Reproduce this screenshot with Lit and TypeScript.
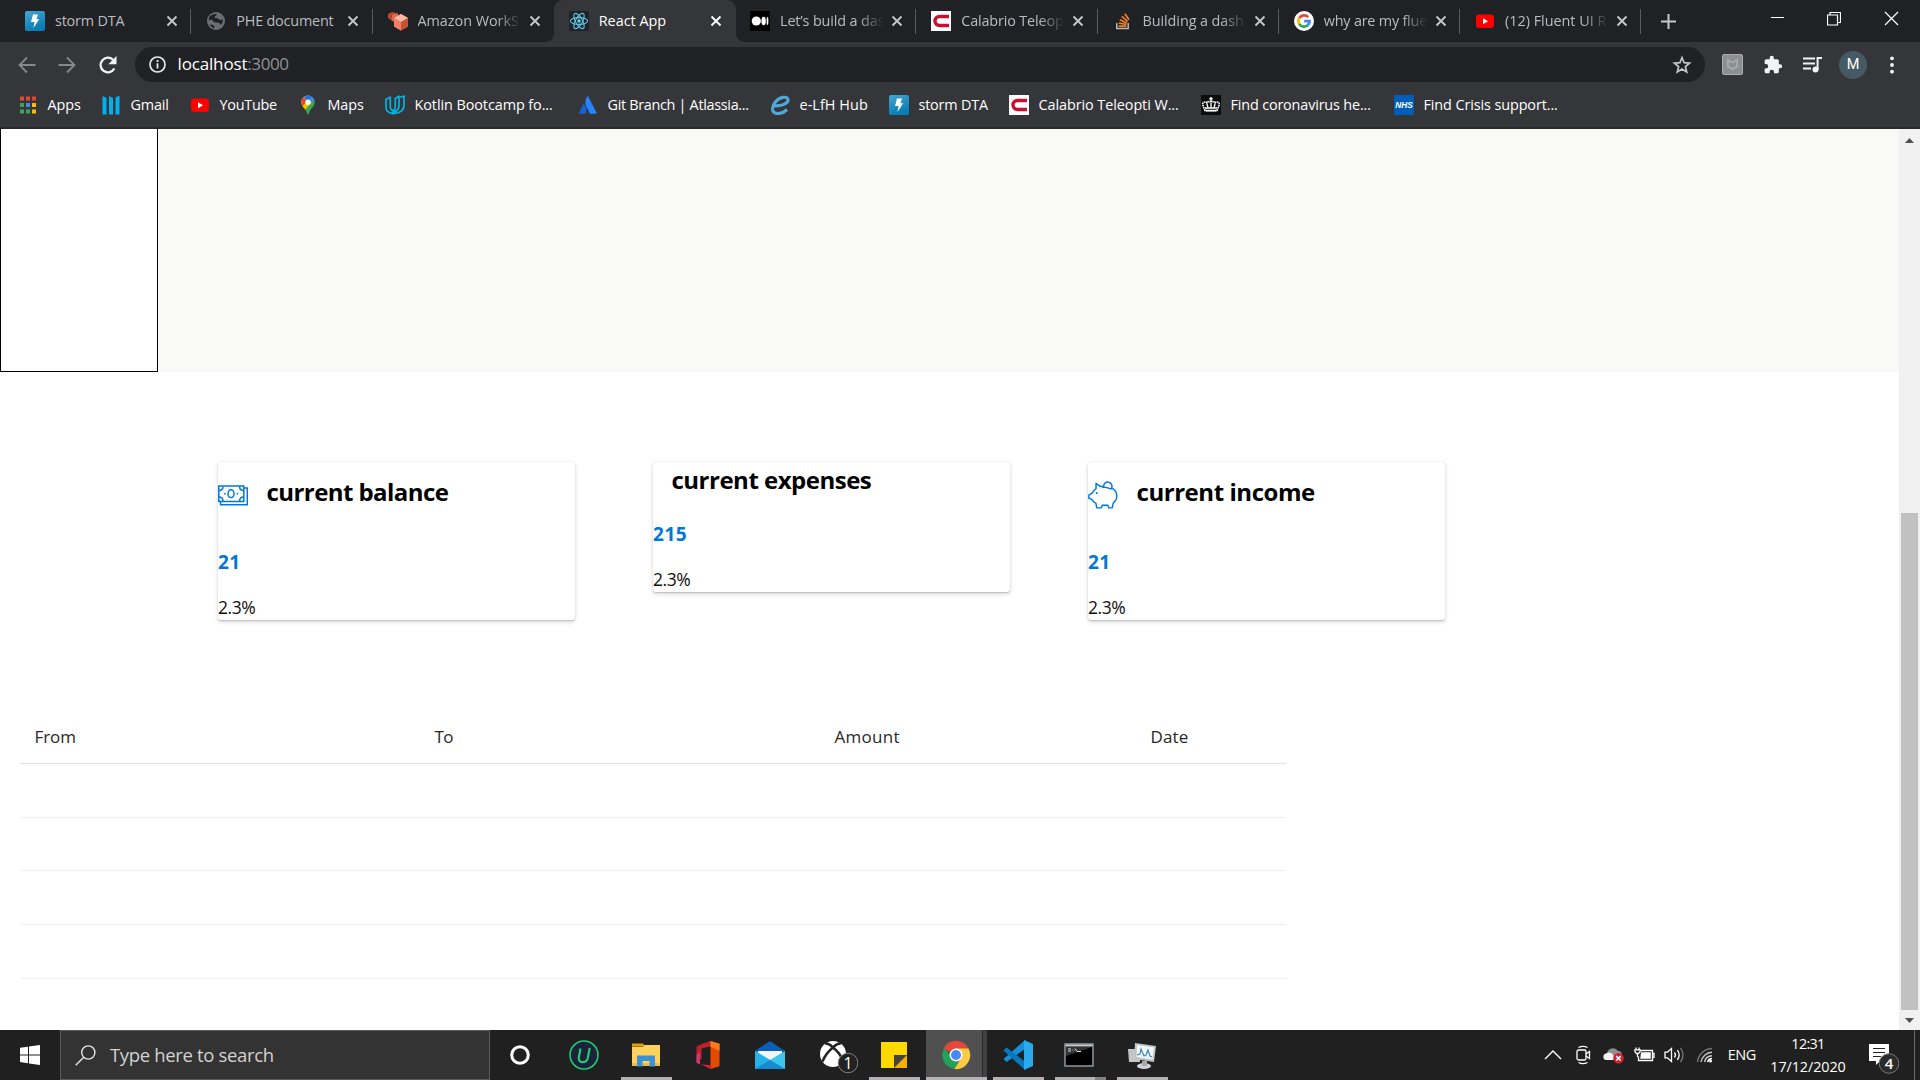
import { LitElement, html, css, TemplateResult } from "lit";
import { customElement, property } from "lit/decorators.js";
import { classMap } from "lit/directives/class-map.js";
import { styleMap } from "lit/directives/style-map.js";

/* A single line of text whose tracking is adjusted to fill a given width. */
@customElement("fit-text")
class FitText extends LitElement {
  @property() text = "";
  @property({ type: Number }) w = 0;
  static styles = css`
    :host { display: inline-block; white-space: pre; }
    .run { display: inline-block; font-variant-ligatures: none; }
  `;
  updated() {
    const run = this.renderRoot.querySelector(".run") as HTMLElement;
    run.style.letterSpacing = "0px";
    const natural = run.getBoundingClientRect().width;
    if (this.w > 0) run.style.letterSpacing = `${(this.w + 0.3 - natural) / this.text.length}px`;
  }
  render() {
    return html`<span class="run">${this.text}</span>`;
  }
}

const fit = (text: string, w: number) => html`<fit-text .text=${text} .w=${w}></fit-text>`;

const stormIcon = html`<svg width="20" height="20" viewBox="0 0 20 20"><defs><linearGradient id="a" x1="0" y1="0" x2=".4" y2="1"><stop offset="0" stop-color="#48a5cf"/><stop offset="1" stop-color="#067db5"/></linearGradient></defs><rect width="20" height="20" rx="2" fill="url(#a)"/><path d="M8 3.5h5l-1.6 4.8h2.8L8.4 17l1.2-6H6z" fill="#fff"/></svg>`;
const globeIcon = html`<svg width="20" height="20" viewBox="0 0 20 20"><circle cx="10" cy="10" r="9" fill="#6b6e72"/><path d="M3.200 6.200C5 3.500 8 2.600 11 3c-.3 1.700-2 1.800-2.600 3 .6 1.800 3.200.8 4.600 2.200 1 1.300 3 .6 4 .1 0 2.500-.9 4.300-2.200 5.700-.8-1.300-1.600-2.500-3.300-2.400-2.300.1-4.500-.5-5.200-2.600-1-.6-2.500 0-3.400.5-.1-1.300 0-2.200.3-3.300zM4 13.500c1.900 0 3.600.5 4.300 1.800.1.900.2 1.300.1 2C6.500 16.900 5 15.500 4 13.500z" fill="#202124"/></svg>`;
const amazonIcon = html`<svg width="20" height="20" viewBox="0 0 20 20"><path d="M0 3l4-2 3 .5v2L3.500 5 3 9 0 7z" fill="#c1442e"/><path d="M4 4l3-1.500 3-.2v3L6 7v4L3 9z" fill="#dd6b4d"/><path d="M13 3l7 4v8.500l-7 4-7-4V7z" fill="#e8765a"/><path d="M13 3l7 4-7 4-7-4z" fill="#f9b9a2"/><path d="M6 7l7 4v8.500l-7-4z" fill="#ef8063"/><path d="M13 11l7-4v8.500l-7 4z" fill="#c94f35"/></svg>`;
const reactIcon = html`<svg width="20" height="20" viewBox="0 0 20 20"><rect width="20" height="20" rx="1" fill="#20232a"/><g fill="none" stroke="#5cc5dd" stroke-width="1.100"><ellipse cx="10" cy="10" rx="8.600" ry="3.400"/><ellipse cx="10" cy="10" rx="8.600" ry="3.400" transform="rotate(60 10 10)"/><ellipse cx="10" cy="10" rx="8.600" ry="3.400" transform="rotate(120 10 10)"/></g><circle cx="10" cy="10" r="1.700" fill="#61dafb"/></svg>`;
const mediumIcon = html`<svg width="20" height="20" viewBox="0 0 20 20"><rect width="20" height="20" fill="#000"/><circle cx="6.300" cy="10" r="4.600" fill="#fff"/><ellipse cx="13.600" cy="10" rx="2.200" ry="4.300" fill="#fff"/><ellipse cx="17.500" cy="10" rx=".9" ry="3.900" fill="#fff"/></svg>`;
const calabrioIcon = html`<svg width="20" height="20" viewBox="0 0 20 20"><rect width="20" height="20" fill="#fff"/><path d="M18 5.500H8.500a4.500 4.500 0 0 0 0 9H18" fill="none" stroke="#c8102e" stroke-width="3.400"/></svg>`;
const stackIcon = html`<svg width="20" height="20" viewBox="0 0 20 20"><path d="M3.800 12v5.500h11.400V12" fill="none" stroke="#bcbbbb" stroke-width="1.500"/><g stroke="#f48024" stroke-width="1.700"><path d="M5.700 15.200h7.600M5.800 12l7.500 1.500M6.800 8.700l7 3.200M8.800 5.400l5.900 4.900M11.800 2.800l4.300 6"/></g></svg>`;
const googleIcon = html`<svg width="20" height="20" viewBox="0 0 20 20"><circle cx="10" cy="10" r="10" fill="#fff"/><g fill="none" stroke-width="2.700"><path d="M5.300 7.100A5.600 5.600 0 0 1 14.200 6.100" stroke="#ea4335"/><path d="M5.300 13A5.600 5.600 0 0 1 5.300 7" stroke="#fbbc05"/><path d="M14 14A5.600 5.600 0 0 1 5.200 12.900" stroke="#34a853"/><path d="M10.200 10.200h5.300c0 1.700-.5 3-1.700 4" stroke="#4285f4"/></g></svg>`;
const youtubeIcon = html`<svg width="20" height="20" viewBox="0 0 20 20"><rect x="1" y="3.500" width="18" height="13.500" rx="3.200" fill="#f00"/><path d="M8 7.300v6l5-3z" fill="#fff"/></svg>`;
const tabClose = html`<svg width="12" height="12" viewBox="0 0 12 12"><path d="M1.500 1.500l9 9M10.500 1.500l-9 9" stroke="currentColor" stroke-width="1.900"/></svg>`;

const appsIcon = html`<svg width="20" height="20" viewBox="0 0 20 20"><g><path fill="#ea4335" d="M2 1.500h4v4H2zM8 1.500h4v4H8zM14 1.500h4v4h-4z"/><path fill="#34a853" d="M2 8h4v4H2zM2 14.500h4v4H2zM8 14.500h4v4H8z"/><path fill="#4285f4" d="M8 8h4v4H8z"/><path fill="#fbbc05" d="M14 8h4v4h-4zM14 14.500h4v4h-4z"/></g></svg>`;
const gmailIcon = html`<svg width="20" height="20" viewBox="0 0 20 20"><path d="M1.500 1l4 2v16.500h-4zM8 1l4 2v16.500H8zM18.500.5v19h-4V2.500z" fill="#00b0f0"/></svg>`;
const mapsIcon = html`<svg width="20" height="20" viewBox="0 0 20 20"><defs><clipPath id="m"><path d="M10 .5a6.700 6.700 0 0 0-6.700 6.700C3.300 11.500 8 13.500 9.300 19c.2.800 1.200.8 1.400 0C12 13.500 16.700 11.500 16.700 7.200A6.700 6.700 0 0 0 10 .5z"/></clipPath></defs><g clip-path="url(#m)"><path fill="#34a853" d="M0 0h20v20H0z"/><path fill="#fbbc04" d="M0 15L13 1 5 0 0 5z M3 12l4 3 7-8-4-1z"/><path fill="#4285f4" d="M7 0h12v3.500L12.800 7 10 7z"/><path fill="#ea4335" d="M2 2l4 1 3 3-5 5-3-4z"/><path fill="#1a73e8" d="M5.500 1.500L9 6l6-5z"/></g><circle cx="10" cy="7.200" r="2.600" fill="#fff"/></svg>`;
const udacityIcon = html`<svg width="20" height="20" viewBox="0 0 20 20"><g fill="none" stroke="#02b3e4" stroke-width="1.700" stroke-linejoin="round" stroke-linecap="round"><path d="M5.300 2L1 4.500v7.700c0 3.200 2.200 5.300 5.700 6.300l4-2.200C7 16 5.300 14 5.300 11.500z"/><path d="M14 1.200l-3.700 2.300v8.500c0 1.800-.9 3.200-2.300 4M14 1.200v9.500c0 2.500-1.300 4.500-3.500 5.600"/><path d="M14 2.500L19 1v9.500c0 4.500-4 8.500-12.300 8"/></g></svg>`;
const atlassianIcon = html`<svg width="20" height="20" viewBox="0 0 20 20"><path d="M6 9.300c-.4-.5-.9-.4-1.100.1L1.100 17.800c-.2.500 0 .9.500.9h5.600c2-3.600 1.300-7.300-1.200-9.400z" fill="#1463d8"/><path d="M9.200 1.500c-2.500 4-2 7.500-.5 10.500l3 6.200c.1.300.4.500.7.500h5.600c.5 0 .8-.5.600-.9L10.200 1.500c-.2-.5-.7-.5-1 0z" fill="#2684ff"/></svg>`;
const elfhIcon = html`<svg width="20" height="20" viewBox="0 0 20 20"><path d="M4 10.800c7 .6 14.500-2.300 14-6.300-.7-4-9-2.500-13 3-4.500 6.500-2.500 11 3 11 3.500 0 6.500-1.500 9-4" fill="none" stroke="#4fa8d8" stroke-width="3.200"/></svg>`;
const crownIcon = html`<svg width="20" height="20" viewBox="0 0 20 20"><rect width="20" height="20" fill="#0b0c0c"/><path d="M10 2v4.500M8.300 3.800h3.400" stroke="#fff" stroke-width="1.500"/><path d="M4 15.500L2 10.500c-1.200-3 2-4.800 4-2.500 1-2 3-2 4-.5 1-1.500 3-1.500 4 .5 2-2.300 5.200-.5 4 2.500l-2 5z" fill="none" stroke="#fff" stroke-width="1.600" stroke-dasharray="1.600 .6"/><path d="M6 9l1 4M10 8v5M14 9l-1 4M4 13h12" stroke="#fff" stroke-width="1.300"/><path d="M4.500 15.700h11" stroke="#fff" stroke-width="1.600"/></svg>`;
const nhsIcon = html`<svg width="20" height="20" viewBox="0 0 20 20"><rect width="20" height="20" fill="#005eb8"/><text x="10" y="13.300" text-anchor="middle" textLength="17.500" lengthAdjust="spacingAndGlyphs" font-family="Liberation Sans, sans-serif" font-weight="700" font-style="italic" font-size="9.500" fill="#fff">NHS</text></svg>`;

interface Tab { icon: TemplateResult; text: string; w: number; active?: boolean; bar?: boolean }
const tabs: Tab[] = [
  { icon: stormIcon, text: "storm DTA", w: 69, bar: true },
  { icon: globeIcon, text: "PHE document", w: 97, bar: true },
  { icon: amazonIcon, text: "Amazon WorkS", w: 101 },
  { icon: reactIcon, text: "React App", w: 67, active: true },
  { icon: mediumIcon, text: "Let’s build a das", w: 104, bar: true },
  { icon: calabrioIcon, text: "Calabrio Teleop", w: 102, bar: true },
  { icon: stackIcon, text: "Building a dash", w: 101, bar: true },
  { icon: googleIcon, text: "why are my flue", w: 103, bar: true },
  { icon: youtubeIcon, text: "(12) Fluent UI R", w: 101, bar: true },
];

const bookmarks: { icon: TemplateResult; text: string; w: number }[] = [
  { icon: appsIcon, text: "Apps", w: 33 },
  { icon: gmailIcon, text: "Gmail", w: 38 },
  { icon: youtubeIcon, text: "YouTube", w: 57 },
  { icon: mapsIcon, text: "Maps", w: 36 },
  { icon: udacityIcon, text: "Kotlin Bootcamp fo...", w: 138 },
  { icon: atlassianIcon, text: "Git Branch | Atlassia...", w: 141 },
  { icon: elfhIcon, text: "e-LfH Hub", w: 68 },
  { icon: stormIcon, text: "storm DTA", w: 69 },
  { icon: calabrioIcon, text: "Calabrio Teleopti W...", w: 140 },
  { icon: crownIcon, text: "Find coronavirus he...", w: 140 },
  { icon: nhsIcon, text: "Find Crisis support...", w: 134 },
];

@customElement("browser-chrome")
class BrowserChrome extends LitElement {
  static styles = css`
    :host { display: block; height: 129px; background: #35363a; color: #fff; font: 14.4px/20px "Open Sans", sans-serif; }
    svg { display: block; flex: none; }
    .chrome { display: flex; flex-direction: column; height: 129px; box-sizing: border-box; border-bottom: 2px solid #28292c; }
    .strip { display: flex; height: 42px; background: #202124; padding-left: 11px; }
    .tab { display: flex; align-items: center; width: 181.25px; flex: none; box-sizing: border-box; padding-left: 14px; color: #b9bcc1; }
    .tab.bar { background: linear-gradient(#5a5c60, #5a5c60) right 1px top 9px / 1px 25px no-repeat; }
    .tab.active { position: relative; width: 182.25px; margin-left: -1px; padding-left: 15px; background: #35363a; color: #fff; border-radius: 9px 9px 0 0; }
    .active::before, .active::after { content: ""; position: absolute; bottom: 0; width: 8px; height: 8px; }
    .active::before { left: -8px; background: radial-gradient(circle at 0 0, transparent 7.5px, #35363a 8px); }
    .active::after { right: -8px; background: radial-gradient(circle at 100% 0, transparent 7.5px, #35363a 8px); }
    .label { width: 106px; margin-left: 10px; height: 20px; }
    .label.long { -webkit-mask-image: linear-gradient(90deg, #000 74%, transparent 98%); mask-image: linear-gradient(90deg, #000 74%, transparent 98%); }
    .x { margin-left: 5px; color: #c5c7ca; }
    .active .x { color: #fff; }
    .plus { margin: 13px 0 0 18px; }
    .win { display: flex; margin-left: auto; padding: 11px 21px 0 0; gap: 43px; }
    .min { margin-right: -1px; }
    .bar2 { display: flex; align-items: center; height: 45px; }
    .nav { display: flex; width: 135px; box-sizing: border-box; padding-left: 17px; gap: 20px; }
    .omni { display: flex; align-items: center; width: 1570px; height: 35px; border-radius: 18px; background: #202124; box-sizing: border-box; padding: 0 12px 0 13px; }
    .url { display: flex; margin-left: 10.5px; font-size: 17px; line-height: 24px; margin-top: -1px; }
    .port { color: #8f9296; }
    .star { margin-left: auto; }
    .tools { display: flex; align-items: center; padding-left: 17px; }
    .puzzle { margin-left: 20px; }
    .music { margin-left: 19px; }
    .me { width: 28px; height: 28px; border-radius: 50%; background: #455a64; text-align: center; line-height: 28px; font-size: 14.5px; font-family: Roboto, sans-serif; margin-left: 16px; }
    .dots { margin-left: 22px; }
    .marks { display: grid; grid-template-columns: 83px 89px 108px 87px 193px 192px 119px 120px 192px 193px 180px; padding: 8px 0 0 18px; }
    .mark { display: flex; align-items: center; gap: 9.5px; height: 20px; }
  `;
  render() {
    return html`
      <div class="chrome">
        <div class="strip">
          ${tabs.map((t) => html`
            <div class=${classMap({ tab: true, active: !!t.active, bar: !!t.bar })}>
              ${t.icon}
              <div class=${classMap({ label: true, long: t.w > 100 })}>${fit(t.text, t.w)}</div>
              <span class="x">${tabClose}</span>
            </div>`)}
          <svg class="plus" width="17" height="17" viewBox="0 0 17 17"><path d="M8.500 1v15M1 8.500h15" stroke="#c5c7ca" stroke-width="2"/></svg>
          <div class="win">
            <svg class="min" width="14" height="14" viewBox="0 0 14 14"><path d="M0 6.500h13" stroke="#fff"/></svg>
            <svg width="14" height="15" viewBox="0 0 14 15"><path d="M.5 4h10v10H.5zM3 4V1.500h10.500v10H11" fill="none" stroke="#fff" stroke-width="1.200"/></svg>
            <svg width="15" height="15" viewBox="0 0 15 15"><path d="M1 1l13 13M14 1L1 14" stroke="#fff" stroke-width="1.200"/></svg>
          </div>
        </div>
        <div class="bar2">
          <div class="nav">
            <svg width="20" height="20" viewBox="0 0 20 20"><path d="M18.500 10H3M10 2.500L2.500 10l7.500 7.500" fill="none" stroke="#87888b" stroke-width="1.800"/></svg>
            <svg width="20" height="20" viewBox="0 0 20 20"><path d="M1.500 10H17M10 2.500l7.500 7.500-7.500 7.500" fill="none" stroke="#87888b" stroke-width="1.800"/></svg>
            <svg width="22" height="20" viewBox="0 0 22 20"><path d="M17.300 13.500A7.300 7.300 0 1 1 16 4.800" fill="none" stroke="#f1f3f4" stroke-width="2.300"/><path d="M19.500 1v8.200h-8.200z" fill="#f1f3f4"/></svg>
          </div>
          <div class="omni">
            <svg width="19" height="19" viewBox="0 0 19 19"><circle cx="9.500" cy="9.500" r="7.500" fill="none" stroke="#e8eaed" stroke-width="1.700"/><path d="M9.500 8.300v5.200M9.500 5v2" stroke="#e8eaed" stroke-width="1.800"/></svg>
            <div class="url">${fit("localhost", 69.5)}<span class="port">${fit(":3000", 41)}</span></div>
            <svg class="star" width="22" height="22" viewBox="0 0 22 22"><path d="M11 3.500l2.100 5.200 5.500.4-4.200 3.500 1.300 5.400-4.700-3-4.700 3 1.300-5.400-4.200-3.500 5.500-.4z" fill="none" stroke="#c5c7ca" stroke-width="1.700"/></svg>
          </div>
          <div class="tools">
            <svg width="21" height="21" viewBox="0 0 21 21"><rect x=".5" y=".5" width="20" height="20" rx="1.500" fill="#8d9093" stroke="#a9acaf"/><path d="M6 6l4.500 2.500L15 6v6.800L10.500 15 6 12.800z" fill="none" stroke="#a9adb2" stroke-width="1.800"/></svg>
            <svg class="puzzle" width="20" height="20" viewBox="0 0 24 24"><path d="M20.500 11H19V7a2 2 0 0 0-2-2h-4V3.500a2.500 2.500 0 0 0-5 0V5H4a2 2 0 0 0-2 2v3.800h1.500a2.700 2.700 0 0 1 0 5.400H2V20c0 1.100.9 2 2 2h3.800v-1.500a2.700 2.700 0 0 1 5.400 0V22H17a2 2 0 0 0 2-2v-4h1.500a2.500 2.500 0 0 0 0-5z" fill="#f1f3f4"/></svg>
            <svg class="music" width="21" height="20" viewBox="0 0 21 20"><path d="M1 3.500h12M1 8.500h12M1 13.500h8" stroke="#f1f3f4" stroke-width="2"/><circle cx="13.500" cy="14.500" r="3" fill="#f1f3f4"/><path d="M15.600 15V3H20" fill="none" stroke="#f1f3f4" stroke-width="2"/></svg>
            <div class="me">M</div>
            <svg class="dots" width="6" height="20" viewBox="0 0 6 20"><g fill="#f1f3f4"><circle cx="3" cy="3.300" r="1.900"/><circle cx="3" cy="10" r="1.900"/><circle cx="3" cy="16.700" r="1.900"/></g></svg>
          </div>
        </div>
        <div class="marks">
          ${bookmarks.map((b) => html`<div class="mark">${b.icon}${fit(b.text, b.w)}</div>`)}
        </div>
      </div>`;
  }
}

const moneyIcon = html`<svg width="30" height="21" viewBox="0 0 30 21"><g fill="none" stroke="#0078d4" stroke-width="1.500"><path d="M.8 1h25v15.500H.8z"/><path d="M26 3h3.300v16.800H2.500V17"/><path d="M1 5.500c2.500 0 4-1.500 4-4M25.600 5.500c-2.500 0-4-1.500-4-4M1 12c2.500 0 4 1.500 4 4M25.600 12c-2.500 0-4 1.500-4 4"/><ellipse cx="13" cy="8.700" rx="3" ry="3.900"/></g><path d="M6 8h1.600v1.500H6zM18.600 8h1.600v1.500h-1.600z" fill="#0078d4"/></svg>`;
const pigIcon = html`<svg width="31" height="29" viewBox="0 0 31 29"><g fill="none" stroke="#0078d4" stroke-width="1.500" stroke-linejoin="round"><path d="M16 5.500L12.500 5 8.300 2v5.500C6.500 8.500 5.500 10 4.500 11.700L.9 14v3.300l3 1.200c1 1.700 2.500 3.200 4.300 4.200L9 27.300h4.700l1-2.800h5.800l1 2.800H25l1-5c2.500-2 3.800-4.700 3.800-7.500 0-3.500-2-6.300-5-8"/><path d="M14.500 5.800c3.500.1 6.500.7 9.800 2.200"/><path d="M16.300 6a4.300 4.300 0 1 1 7.500 1.700"/></g><circle cx="9" cy="12" r="1" fill="#0078d4"/></svg>`;

interface Card { icon?: TemplateResult; title: string; tw: number; value: string; vw: number }
const cards: Card[] = [
  { icon: moneyIcon, title: "current balance", tw: 181.5, value: "21", vw: 22 },
  { title: "current expenses", tw: 199.5, value: "215", vw: 34 },
  { icon: pigIcon, title: "current income", tw: 178, value: "21", vw: 22 },
];
const columns = [
  { name: "From", w: 41, span: 400 },
  { name: "To", w: 18, span: 400 },
  { name: "Amount", w: 65, span: 316 },
  { name: "Date", w: 37.5, span: 150 },
];

@customElement("dashboard-page")
class DashboardPage extends LitElement {
  static styles = css`
    :host { display: flex; height: 901px; background: #fff; font-family: "Open Sans", sans-serif; }
    .page { flex: 1; overflow: hidden; }
    .band { height: 243px; background: #f9f9f8; }
    .side { width: 158px; height: 243px; box-sizing: border-box; background: #fff; border: 1px solid #000; border-top: 0; }
    .cards { display: flex; align-items: flex-start; gap: 78px; padding: 90px 0 0 218px; height: 249px; box-sizing: border-box; }
    .card { width: 357px; height: 158px; border-radius: 3px; box-shadow: 0 2px 4.5px rgba(0,0,0,.16), 0 .4px 1.2px rgba(0,0,0,.14); background: #fff; }
    .card.plain { height: 130px; }
    .head { display: flex; height: 86px; box-sizing: border-box; padding-top: 15px; }
    .plain .head { height: 58px; padding-top: 3px; }
    .pic { width: 30px; height: 29px; margin-top: 3.5px; display: flex; align-items: center; }
    .title { font-size: 24px; font-weight: 700; line-height: 30px; color: #000; margin-left: 18.5px; }
    .value { font-size: 19px; font-weight: 700; line-height: 26px; color: #0078d4; height: 26px; margin-top: 1px; }
    .pct { font-size: 17.5px; font-weight: 400; line-height: 24px; color: #111; height: 24px; margin-top: 20px; }
    .table { width: 1266px; margin: 0 0 0 20px; padding-top: 88px; }
    .row { height: 54px; box-sizing: border-box; border-bottom: 1px solid #f0f0f0; }
    .row.h { display: flex; height: 55px; border-bottom-color: #e3e2e1; padding-top: 16px; }
    .row.alt { height: 53px; }
    .cell { padding-left: 14.5px; box-sizing: border-box; font-size: 17px; font-weight: 500; line-height: 24px; color: #292827; }
    .scroll { display: flex; flex-direction: column; align-items: center; width: 21px; background: #f1f1f1; }
    .scroll svg { display: block; }
    .track { flex: 1; padding-top: 363px; display: flex; }
    .thumb { width: 17px; background: #c1c1c1; }
  `;
  render() {
    return html`
      <div class="page">
        <div class="band"><div class="side"></div></div>
        <div class="cards">
          ${cards.map((c) => html`
            <div class=${classMap({ card: true, plain: !c.icon })}>
              <div class="head">
                ${c.icon ? html`<div class="pic">${c.icon}</div>` : ""}
                <div class="title">${fit(c.title, c.tw)}</div>
              </div>
              <div class="value">${fit(c.value, c.vw)}</div>
              <div class="pct">${fit("2.3%", 37)}</div>
            </div>`)}
        </div>
        <div class="table">
          <div class="row h">
            ${columns.map((c) => html`<div class="cell" style=${styleMap({ width: `${c.span}px` })}>${fit(c.name, c.w)}</div>`)}
          </div>
          <div class="row"></div><div class="row alt"></div><div class="row"></div><div class="row"></div>
        </div>
      </div>
      <div class="scroll">
        <svg width="21" height="21" viewBox="0 0 21 21"><path d="M6 14h9l-4.500-5z" fill="#505050"/></svg>
        <div class="track"><div class="thumb"></div></div>
        <svg width="21" height="20" viewBox="0 0 21 20"><path d="M6 8h9l-4.500 5z" fill="#505050"/></svg>
      </div>`;
  }
}

const taskIcons: { icon: TemplateResult; state?: string }[] = [
  { icon: html`<svg width="32" height="32" viewBox="0 0 32 32"><circle cx="16" cy="16" r="8.300" fill="none" stroke="#fff" stroke-width="3"/></svg>`, state: "cortana" },
  { icon: html`<svg width="32" height="32" viewBox="0 0 32 32"><circle cx="16" cy="16" r="14" fill="#1c2237" stroke="#1fc978" stroke-width="1.600"/><path d="M12.500 9.500l-1.700 9c-.7 6 7.700 6.300 9 .5l1.900-10" fill="none" stroke="#1fc978" stroke-width="2.200"/></svg>` },
  { icon: html`<svg width="32" height="32" viewBox="0 0 32 32"><path d="M2 4.500h11l2 2.500H2z" fill="#e2a200"/><path d="M2 7.500h11l2-1.500h15v21H2z" fill="#ffd25c"/><path d="M2 24h28v3H2z" fill="#e9bb4c"/><path d="M7 27.500v-11h18v11h-5.500V22h-7v5.500z" fill="#3a92d6"/></svg>`, state: "open" },
  { icon: html`<svg width="32" height="32" viewBox="0 0 32 32"><path d="M18 2L9 5.200 4.500 7.500V22l5-2V9.500L20 7z" fill="#b8232c"/><path d="M4.500 16v8l3.500 1.300V13z" fill="#c93a72"/><path d="M18.500 2l9 2.800v22.400l-9 2.800z" fill="#e64a00"/><path d="M18.500 2l9 2.800v7l-9-4z" fill="#ff7a1a"/><path d="M9 25.300l9.500 1v3.700z" fill="#e01b40"/></svg>` },
  { icon: html`<svg width="32" height="32" viewBox="0 0 32 32"><path d="M1 12L16 2l15 10v7H1z" fill="#0a5fb8"/><path d="M4 12h24v7L16 26 4 19z" fill="#f3f6f8"/><path d="M1 12l15 9L31 12v18H1z" fill="#3cc6ee"/><path d="M1 12l15 9-15 9z" fill="#25b2e8"/><path d="M16 21L31 30H1z" fill="#1d92d8"/><path d="M1 30l15-9 4 2.500L31 30z" fill="#188ad2"/></svg>` },
  { icon: html`<svg width="42" height="40" viewBox="0 0 42 40"><circle cx="17" cy="16" r="13" fill="#fff"/><path d="M6.500 23.500C9 17.500 13 12.500 17 9.500M27.500 23.500C25 17.500 21 12.500 17 9.500M9 5.500C12 5 14.500 6.500 17 9.500 19.500 6.500 22 5 25 5.500" fill="none" stroke="#222" stroke-width="2.500"/><circle cx="32" cy="25" r="9.800" fill="#222" stroke="#808080"/><text x="32" y="31" text-anchor="middle" font-family="Open Sans, sans-serif" font-size="16" fill="#fff">1</text></svg>`, state: "wide" },
  { icon: html`<svg width="32" height="32" viewBox="0 0 32 32"><path d="M3 3h26v26H3z" fill="#ffd800"/><path d="M16 17h13v12H16z" fill="#f5b000"/><path d="M16 16h13L16 29z" fill="#44423d"/></svg>`, state: "open" },
  { icon: html`<svg width="32" height="32" viewBox="0 0 32 32"><path d="M16 16L3.500 9.500A14 14 0 0 1 28.500 9.500z" fill="#e4483b"/><path d="M16 16h-6L4 9.200A14 14 0 0 0 14.500 30L20 20z" fill="#23a15b"/><path d="M16 9.500h12.500A14 14 0 0 1 14.500 30L21 19z" fill="#fbcb43"/><circle cx="16" cy="16" r="6.500" fill="#fff"/><circle cx="16" cy="16" r="5" fill="#4688f4"/></svg>`, state: "active" },
  { icon: html`<svg width="32" height="32" viewBox="0 0 32 32"><path d="M23 1L1.500 20 4.500 23 23 10z" fill="#168fda"/><path d="M1.500 11.500l3-3L23 22.500V31z" fill="#0877bd"/><path d="M22 1l9 4v22l-9 4z" fill="#2aa9ee"/></svg>`, state: "open" },
  { icon: html`<svg width="32" height="32" viewBox="0 0 32 32"><path d="M2 5h28v22H2z" fill="#000" stroke="#8d979f" stroke-width="1.500"/><path d="M2.500 5.500h27v2h-27z" fill="#c5ccd2"/><path d="M3 8h26L3 17z" fill="#333"/><path d="M5 10h3M5 12h3M10 10.500v1M12 9.500l2 3h4" stroke="#ddd" fill="none"/></svg>`, state: "open multi" },
  { icon: html`<svg width="32" height="32" viewBox="0 0 32 32"><path d="M2 10h12v13H3z" fill="#c4c6c7"/><ellipse cx="18" cy="27" rx="7" ry="3" fill="#d0d2d3"/><path d="M16 22h5v5h-5z" fill="#aaa"/><path d="M9 4l21 3-2 16-20-3z" fill="#bfc3c5"/><path d="M11 6l17 2.500-1.500 12L10.500 18z" fill="#f2f7fa"/><path d="M11 16l3-1 1-5 3 7 2-1 2-5 2 6 2 1" fill="none" stroke="#3685c0" stroke-width="1.200"/></svg>`, state: "open" },
];

@customElement("desktop-taskbar")
class DesktopTaskbar extends LitElement {
  static styles = css`
    :host { display: flex; height: 50px; background: #202020; color: #fff; font-family: "Open Sans", sans-serif; }
    svg { display: block; flex: none; }
    .start { width: 60px; display: flex; align-items: center; justify-content: center; }
    .search { display: flex; align-items: center; width: 430px; box-sizing: border-box; border: 1px solid #5b5b5b; background: #333; padding-left: 14px; gap: 14px; font-size: 18.5px; line-height: 26px; color: #d2d2d2; }
    .apps { display: flex; padding-left: 1px; }
    .app { width: 62px; height: 50px; display: flex; align-items: center; justify-content: center; }
    .slot { width: 56px; height: 50px; display: flex; align-items: center; justify-content: center; }
    .cortana .slot { margin-left: -4px; }
    .open .slot { width: 51px; background: linear-gradient(#b4b0b4, #b4b0b4) bottom / 100% 3px no-repeat; }
    .wide svg { margin: 6px -7px 0 3px; }
    .multi .slot { background: linear-gradient(90deg, #b4b0b4 40px, #848184 40px) bottom / 100% 3px no-repeat; }
    .multi svg { margin-left: -2px; }
    .active .slot { width: 61px; box-sizing: border-box; padding-right: 1px; background: linear-gradient(#b4b0b4, #b4b0b4) bottom / 100% 3px no-repeat, linear-gradient(90deg, #505050 56px, #292929 56px, #292929 57px, #414141 57px); }
    .tray { display: flex; align-items: center; margin-left: auto; }
    .cam { margin-left: 13px; }
    .cloud { margin-left: 11px; }
    .power { margin-left: 9px; }
    .vol { margin-left: 9px; }
    .net { margin-left: 11px; }
    .lang { margin: 0 0 0 14px; font-size: 14.5px; line-height: 20px; }
    .clock { display: flex; flex-direction: column; align-items: center; width: 80px; margin: -1px 0 0 12px; font-size: 14.4px; line-height: 23px; }
    .note { margin-left: 21px; margin-top: 7px; }
    .edge { width: 5px; height: 50px; border-left: 1px solid #6a6a6a; margin-left: 14px; }
  `;
  render() {
    return html`
      <div class="start"><svg width="20" height="20" viewBox="0 0 20 20"><path d="M0 2.800L8 1.700v7.700H0zM9 1.500L20 0v9.400H9zM0 10.400h8v7.800L0 17.100zM9 10.400h11V20L9 18.400z" fill="#fff"/></svg></div>
      <div class="search">
        <svg width="21" height="21" viewBox="0 0 21 21"><circle cx="13.300" cy="7.500" r="6.600" fill="none" stroke="#e6e6e6" stroke-width="1.400"/><path d="M8.800 12.300L.7 20.300" stroke="#e6e6e6" stroke-width="1.400"/></svg>
        ${fit("Type here to search", 163.5)}
      </div>
      <div class="apps">
        ${taskIcons.map((t) => html`<div class="app ${t.state ?? ""}"><div class="slot">${t.icon}</div></div>`)}
      </div>
      <div class="tray">
        <svg width="18" height="12" viewBox="0 0 18 12"><path d="M1 10l8-8 8 8" fill="none" stroke="#fff" stroke-width="1.400"/></svg>
        <svg class="cam" width="17" height="20" viewBox="0 0 17 20"><g fill="none" stroke="#fff" stroke-width="1.300"><rect x="2" y="5" width="9" height="10" rx="1.500"/><path d="M11 9l3.500-2.500v7L11 11M3.500 2.500Q8 .2 12.500 2.500M3.500 17.500Q8 19.800 12.500 17.500"/></g></svg>
        <svg class="cloud" width="22" height="20" viewBox="0 0 22 20"><path d="M4 9a6 6 0 0 1 11-3c3 0 4 2 4 4l-8 5z" fill="#8f8f8f"/><path d="M3 15a3.300 3.300 0 0 1 .2-6.500C6 6.500 9 8 10 10l4 5z" fill="#f4f4f4"/><circle cx="15.500" cy="13.300" r="5.300" fill="#d91f2c"/><path d="M13.300 11.100l4.400 4.400M17.700 11.100l-4.400 4.400" stroke="#fff" stroke-width="1.500"/></svg>
        <svg class="power" width="21" height="20" viewBox="0 0 21 20"><path d="M6.500 5.500h12v10H4.500v-4" fill="none" stroke="#fff" stroke-width="1.300"/><path d="M7 7.300h9.800v6.500H6.200z" fill="#fff"/><path d="M18.500 8.300h1.500v4h-1.500M2 2.500v2M5 2.500v2M.9 4.800h5.200v2L4.500 8.500h-2L.9 6.800zM3.500 8.500V12" fill="none" stroke="#fff" stroke-width="1.300"/></svg>
        <svg class="vol" width="21" height="20" viewBox="0 0 21 20"><path d="M1 7.200h2.500L7.500 3.500v13l-4-3.700H1z" fill="none" stroke="#fff" stroke-width="1.300"/><path d="M10.500 7.500q2 2.500 0 5M13.300 5.200q3.800 4.800 0 9.600" fill="none" stroke="#fff" stroke-width="1.300"/><path d="M16.500 2.800q5 7.200 0 14.400" fill="none" stroke="#777" stroke-width="1.300"/></svg>
        <svg class="net" width="18" height="20" viewBox="0 0 18 20"><g fill="none" stroke-width="1.400"><path d="M1.500 17A15 15 0 0 1 16 3.500" stroke="#777"/><path d="M5 17A11.500 11.500 0 0 1 16 7.300M8.500 17A8 8 0 0 1 16 10.700" stroke="#ccc"/><path d="M11.500 17A5 5 0 0 1 16 13.500" stroke="#fff"/></g><circle cx="14.500" cy="16" r="1.500" fill="#fff"/></svg>
        <div class="lang">${fit("ENG", 28)}</div>
        <div class="clock">${fit("12:31", 33)}${fit("17/12/2020", 75)}</div>
        <svg class="note" width="31" height="32" viewBox="0 0 31 32"><path d="M0 1h20v17h-9l-4 4v-4H0z" fill="#fff"/><path d="M4 5.500h12M4 9.500h12M4 13.500h8" stroke="#222" stroke-width="1.200"/><circle cx="20" cy="20.500" r="9.800" fill="#2b2b2b" stroke="#777"/><text x="20" y="26" text-anchor="middle" font-family="Open Sans, sans-serif" font-weight="600" font-size="15" fill="#fff">4</text></svg>
        <div class="edge"></div>
      </div>`;
  }
}

@customElement("app-root")
class AppRoot extends LitElement {
  static styles = css`
    :host { display: block; width: 1920px; height: 1080px; overflow: hidden; }
  `;
  render() {
    return html`<browser-chrome></browser-chrome><dashboard-page></dashboard-page><desktop-taskbar></desktop-taskbar>`;
  }
}
